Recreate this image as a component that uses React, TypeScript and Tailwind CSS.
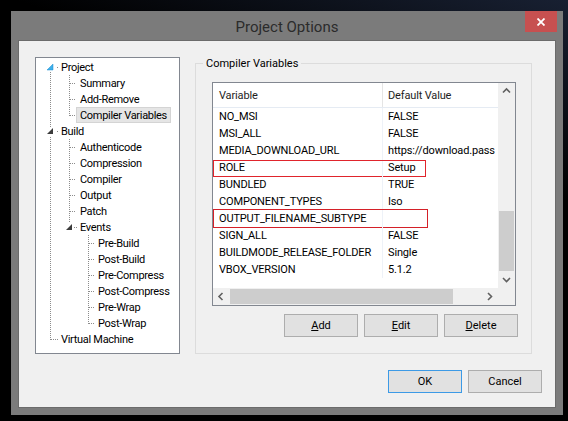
import React from 'react';

const tree = [
  { label: 'Project', level: 0 },
  { label: 'Summary', level: 1 },
  { label: 'Add-Remove', level: 1 },
  { label: 'Compiler Variables', level: 1, selected: true },
  { label: 'Build', level: 0 },
  { label: 'Authenticode', level: 1 },
  { label: 'Compression', level: 1 },
  { label: 'Compiler', level: 1 },
  { label: 'Output', level: 1 },
  { label: 'Patch', level: 1 },
  { label: 'Events', level: 1 },
  { label: 'Pre-Build', level: 2 },
  { label: 'Post-Build', level: 2 },
  { label: 'Pre-Compress', level: 2 },
  { label: 'Post-Compress', level: 2 },
  { label: 'Pre-Wrap', level: 2 },
  { label: 'Post-Wrap', level: 2 },
  { label: 'Virtual Machine', level: 0 },
];

const indent = ['pl-[21px]', 'pl-[40px]', 'pl-[58px]'];

const variables = [
  { name: 'NO_MSI', value: 'FALSE' },
  { name: 'MSI_ALL', value: 'FALSE' },
  { name: 'MEDIA_DOWNLOAD_URL', value: 'https://download.pass' },
  { name: 'ROLE', value: 'Setup', mark: 'role' },
  { name: 'BUNDLED', value: 'TRUE' },
  { name: 'COMPONENT_TYPES', value: 'Iso' },
  { name: 'OUTPUT_FILENAME_SUBTYPE', value: '', mark: 'subtype' },
  { name: 'SIGN_ALL', value: 'FALSE' },
  { name: 'BUILDMODE_RELEASE_FOLDER', value: 'Single' },
  { name: 'VBOX_VERSION', value: '5.1.2' },
];

// dotted connector line, in page pixel coordinates
const Dot = ({ x1, y1, x2, y2 }: { x1: number; y1: number; x2: number; y2: number }) => (
  <line x1={x1} y1={y1} x2={x2} y2={y2} stroke="#8c8c8c" strokeWidth="1" strokeDasharray="1 1" />
);

const TreeLines = () => {
  const lvl1 = [83, 99, 115, 147, 163, 179, 195, 211];
  const lvl2 = [243, 259, 275, 291, 307, 323];
  return (
    <svg className="absolute left-0 top-0" width="143" height="295" viewBox="36 58 143 295">
      <Dot x1={50.5} y1={72} x2={50.5} y2={127} />
      <Dot x1={50.5} y1={137} x2={50.5} y2={340} />
      <Dot x1={51} y1={339.5} x2={59} y2={339.5} />
      <Dot x1={57} y1={67.5} x2={58} y2={67.5} />
      <Dot x1={57} y1={131.5} x2={58} y2={131.5} />
      <Dot x1={69.5} y1={75} x2={69.5} y2={116} />
      <Dot x1={69.5} y1={139} x2={69.5} y2={222} />
      {lvl1.map((y) => (
        <Dot key={y} x1={70} y1={y + 0.5} x2={76} y2={y + 0.5} />
      ))}
      <Dot x1={74} y1={227.5} x2={77} y2={227.5} />
      <Dot x1={88.5} y1={235} x2={88.5} y2={324} />
      {lvl2.map((y) => (
        <Dot key={y} x1={89} y1={y + 0.5} x2={95} y2={y + 0.5} />
      ))}
      <polygon points="53,64 53,70 47,70" fill="#3fb0ea" stroke="#1e8fd0" strokeWidth="0.5" />
      <polygon points="53,128 53,134 47,134" fill="#3c3c3c" />
      <polygon points="72,224 72,230 66,230" fill="#3c3c3c" />
    </svg>
  );
};

const Chevron = ({ dir }: { dir: 'up' | 'down' | 'left' | 'right' }) => {
  const pts = {
    up: '1,5.5 4.5,2 8,5.5',
    down: '1,3 4.5,6.5 8,3',
    left: '5.5,1 2,4.5 5.5,8',
    right: '3,1 6.5,4.5 3,8',
  }[dir];
  return (
    <svg width="9" height="9" viewBox="0 0 9 9">
      <polyline points={pts} fill="none" stroke="#606060" strokeWidth="1.6" />
    </svg>
  );
};

const Button = ({ children, primary }: { children: React.ReactNode; primary?: boolean }) => (
  <button
    className={
      'w-[74px] h-[23px] bg-[#e1e1e1] border text-[11px] text-black leading-none flex items-center justify-center ' +
      (primary ? 'border-[#3c9ae6]' : 'border-[#adadad]')
    }
  >
    {children}
  </button>
);

const ListView = () => (
  <div className="w-[304px] h-[224px] border border-[#828790] bg-white grid grid-cols-[285px_17px] grid-rows-[205px_17px] tracking-[-0.15px]">
    <div className="overflow-hidden">
      {/* Header */}
      <div className="h-[25px] flex border-b border-[#e5ebf3] text-[#1e1e1e]">
        <div className="w-[170px] border-r border-[#e5e5e5] pl-[6px] pt-[2px] flex items-center">Variable</div>
        <div className="pl-[5px] pt-[2px] flex items-center whitespace-nowrap">Default Value</div>
      </div>
      {/* Rows */}
      {variables.map((v) => (
        <div key={v.name} className="relative h-[17px] flex">
          <div className="w-[170px] shrink-0 border-r border-[#eef2f8] pl-[6px] pt-[2px] flex items-center">{v.name}</div>
          <div className="pl-[5px] pt-[2px] flex items-center whitespace-nowrap">{v.value}</div>
          {v.mark === 'role' && (
            <div className="absolute left-0 top-[1px] w-[213px] h-[17px] border border-[#e0242c]" />
          )}
          {v.mark === 'subtype' && (
            <div className="absolute left-0 top-[-1px] w-[215px] h-[19px] border border-[#d42028]" />
          )}
        </div>
      ))}
    </div>
    {/* Vertical scrollbar */}
    <div className="bg-[#f0f0f0] flex flex-col">
      <div className="h-[17px] flex items-center justify-center">
        <Chevron dir="up" />
      </div>
      <div className="flex-1 flex flex-col justify-end">
        <div className="h-[60px] mx-[1px] bg-[#cdcdcd]" />
      </div>
      <div className="h-[17px] flex items-center justify-center">
        <Chevron dir="down" />
      </div>
    </div>
    {/* Horizontal scrollbar */}
    <div className="bg-[#f0f0f0] flex">
      <div className="w-[17px] flex items-center justify-center">
        <Chevron dir="left" />
      </div>
      <div className="flex-1 flex">
        <div className="w-[223px] my-[1px] bg-[#cdcdcd]" />
      </div>
      <div className="w-[17px] flex items-center justify-center">
        <Chevron dir="right" />
      </div>
    </div>
    <div className="bg-[#f0f0f0]" />
  </div>
);

export default function App() {
  return (
    <div className="w-[568px] h-[421px] overflow-hidden bg-[linear-gradient(200deg,#182032_0%,#000000_32%)] pl-[11px] pt-[11px] font-['Roboto',sans-serif] text-[11px] text-black">
      <div className="w-[552px] h-[404px] bg-[#7b7b7b] flex flex-col px-[7px] pb-[7px]">
        {/* Title bar */}
        <div className="h-[29px] -mx-[7px] grid grid-cols-[1fr_auto_1fr]">
          <div />
          <div className="relative top-[2px] text-[15px] leading-[29px] text-[#2b2b2b]">Project Options</div>
          <div className="flex justify-end pr-[6px]">
            <button className="w-[32px] h-[21px] bg-[#c75050] flex items-center justify-center">
              <svg width="8" height="8" viewBox="0 0 8 8">
                <path d="M0.5 0.5 L7.5 7.5 M7.5 0.5 L0.5 7.5" stroke="#ffffff" strokeWidth="1.8" />
              </svg>
            </button>
          </div>
        </div>

        {/* Client area */}
        <div className="flex-1 bg-[#f0f0f0] border border-[#6b6b6b] flex flex-col pt-[16px] pl-[16px] pr-[13px]">
          <div className="flex items-start gap-[15px]">
            {/* Tree */}
            <div className="relative w-[145px] h-[297px] border border-[#828790] bg-white">
              <TreeLines />
              <div className="relative pt-[1px] tracking-[-0.3px]">
                {tree.map((t) => (
                  <div key={t.label} className={'h-[16px] flex ' + indent[t.level]}>
                    <span
                      className={
                        'h-[16px] px-[3px] border leading-[16px] whitespace-nowrap ' +
                        (t.selected ? 'bg-[#e5e5e5] border-[#d4d4d4]' : 'border-transparent')
                      }
                    >
                      {t.label}
                    </span>
                  </div>
                ))}
              </div>
            </div>

            {/* Group box */}
            <fieldset className="w-[337px] h-[297px] m-0 p-0 pl-[7px] min-w-0 border border-[#dcdcdc]">
              <legend className="px-[3px] leading-[12px]">
                <span className="relative top-[1px]">Compiler Variables</span>
              </legend>
              <div className="ml-[9px] mt-[13px] w-[306px]">
                <ListView />
                <div className="mt-[8px] flex justify-end gap-[6px]">
                  <Button>
                    <span className="underline">A</span>dd
                  </Button>
                  <Button>
                    <span className="underline">E</span>dit
                  </Button>
                  <Button>
                    <span className="underline">D</span>elete
                  </Button>
                </div>
              </div>
            </fieldset>
          </div>

          <div className="mt-[16px] flex justify-end gap-[6px]">
            <Button primary>OK</Button>
            <Button>Cancel</Button>
          </div>
        </div>
      </div>
    </div>
  );
}
